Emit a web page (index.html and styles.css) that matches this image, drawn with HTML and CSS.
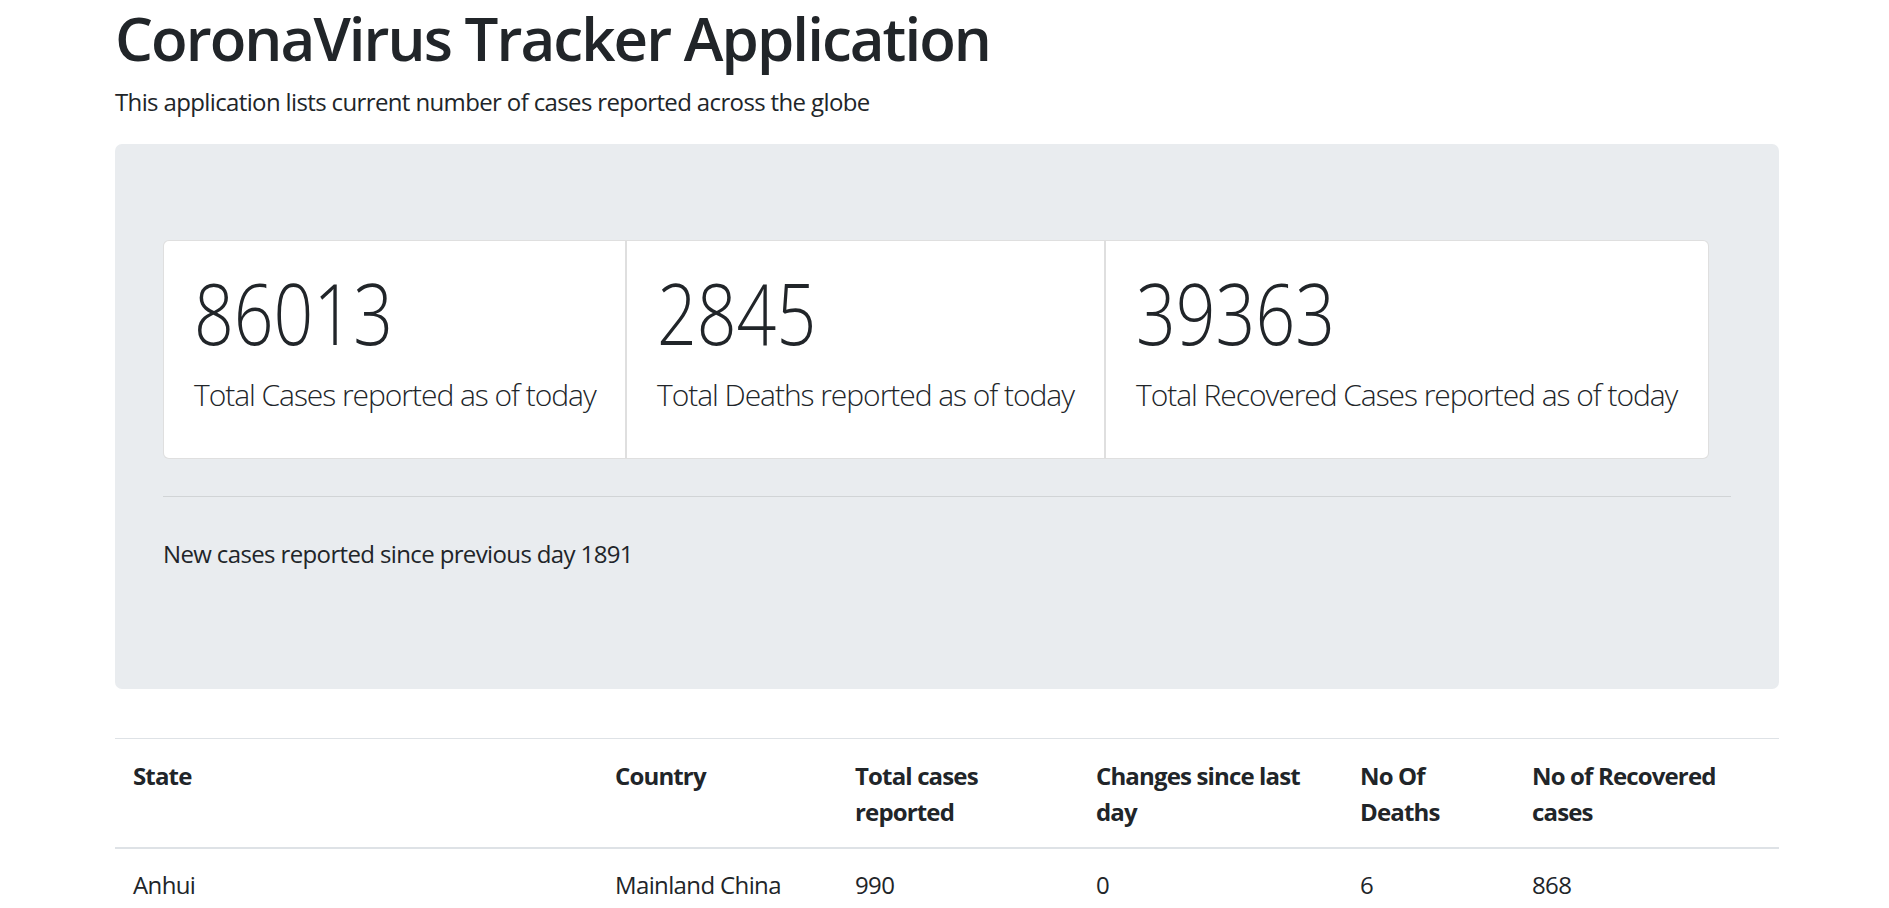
FILE: index.html
```html
<!DOCTYPE html>
<html lang="en">
<head>
<meta charset="utf-8">
<title>CoronaVirus Tracker Application</title>
<link rel="stylesheet" href="styles.css">
</head>
<body>
<div class="container">
  <h1 class="title">CoronaVirus Tracker Application</h1>
  <p class="subtitle">This application lists current number of cases reported across the globe</p>

  <div class="jumbotron">
    <div class="card-group">
      <div class="card card-cases">
        <div class="card-body">
          <h2 class="stat"><span class="stat-num">86013</span></h2>
          <p class="lead">Total Cases reported as of today</p>
        </div>
      </div>
      <div class="card card-deaths">
        <div class="card-body">
          <h2 class="stat"><span class="stat-num">2845</span></h2>
          <p class="lead">Total Deaths reported as of today</p>
        </div>
      </div>
      <div class="card card-recovered">
        <div class="card-body">
          <h2 class="stat"><span class="stat-num">39363</span></h2>
          <p class="lead">Total Recovered Cases reported as of today</p>
        </div>
      </div>
    </div>
    <hr class="divider">
    <p class="new-cases">New cases reported since previous day 1891</p>
  </div>

  <table class="table">
    <colgroup>
      <col class="col-state">
      <col class="col-country">
      <col class="col-total">
      <col class="col-changes">
      <col class="col-deaths">
      <col class="col-recovered">
    </colgroup>
    <thead>
      <tr>
        <th>State</th>
        <th>Country</th>
        <th>Total cases reported</th>
        <th>Changes since last day</th>
        <th>No Of Deaths</th>
        <th>No of Recovered cases</th>
      </tr>
    </thead>
    <tbody>
      <tr>
        <td>Anhui</td>
        <td>Mainland China</td>
        <td>990</td>
        <td>0</td>
        <td>6</td>
        <td>868</td>
      </tr>
      <tr>
        <td>Beijing</td>
        <td>Mainland China</td>
        <td>410</td>
        <td>0</td>
        <td>7</td>
        <td>257</td>
      </tr>
    </tbody>
  </table>
</div>
</body>
</html>
```

FILE: styles.css
```css
* {
  box-sizing: border-box;
}

html, body {
  margin: 0;
  padding: 0;
  background: #ffffff;
}

body {
  font-family: "Open Sans", "Noto Sans", Arial, sans-serif;
  font-size: 24px;
  line-height: 1.5;
  letter-spacing: -0.63px;
  color: #212529;
}

.container {
  width: 1664px;
  margin-left: 115px;
}

.title {
  margin: 0 0 11px 0;
  padding-top: 3px;
  font-size: 60px;
  font-weight: 560;
  line-height: 70px;
  letter-spacing: -1.95px;
}

.subtitle {
  margin: 0 0 24px 0;
}

.jumbotron {
  background: #e9ecef;
  border-radius: 7px;
  padding: 96px 48px;
  margin-bottom: 49px;
}

.card-group {
  display: flex;
}

.card {
  flex: none;
  background: #ffffff;
  border: 1px solid rgba(0, 0, 0, 0.125);
  white-space: nowrap;
}

.card-cases {
  width: 463px;
  border-radius: 6px 0 0 6px;
}

.card-deaths {
  width: 479px;
}

.card-recovered {
  width: 604px;
  border-radius: 0 6px 6px 0;
}

.card-body {
  padding: 30px;
}

.stat {
  margin: 0 0 17px 0;
  font-size: 84px;
  font-weight: 300;
  line-height: 84px;
  letter-spacing: 0;
}

.stat-num {
  display: inline-block;
  transform: scaleX(0.83);
  transform-origin: left center;
}

.lead {
  margin: 0 0 11px 0;
  font-size: 30px;
  font-weight: 300;
  line-height: 45px;
  letter-spacing: -1.05px;
}

.divider {
  margin: 37px 0 39px 0;
  border: 0;
  border-top: 1px solid rgba(0, 0, 0, 0.1);
}

.new-cases {
  margin: 0 0 21px 0;
}

.table {
  width: 100%;
  border-collapse: collapse;
  table-layout: fixed;
}

.col-state { width: 482px; }
.col-country { width: 240px; }
.col-total { width: 241px; }
.col-changes { width: 264px; }
.col-deaths { width: 172px; }
.col-recovered { width: 265px; }

.table th {
  padding: 19px 18px 17px 18px;
  text-align: left;
  vertical-align: top;
  font-weight: 700;
  letter-spacing: -0.85px;
  border-top: 1px solid #dee2e6;
  border-bottom: 2px solid #dee2e6;
}

.table td {
  padding: 18px;
  vertical-align: top;
  border-top: 1px solid #dee2e6;
}
```
